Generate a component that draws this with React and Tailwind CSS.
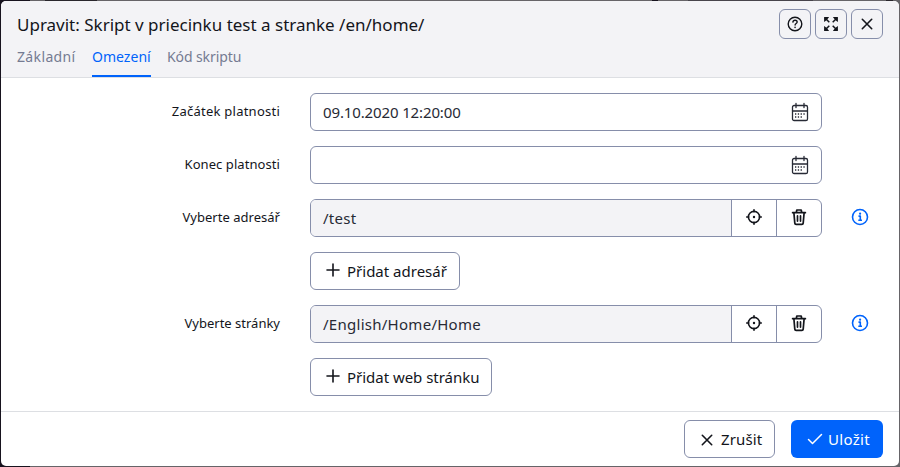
import React from "react";

const HelpIcon = () => (
  <svg width="16" height="16" viewBox="0 0 16 16" fill="none" stroke="currentColor" strokeWidth="1.4" strokeLinecap="round" strokeLinejoin="round">
    <circle cx="8" cy="8" r="6.8" />
    <path d="M5.9 6.1c.1-1.2 1-1.9 2.15-1.9s2.1.75 2.1 1.8c0 1.5-2.05 1.5-2.05 3.1" />
    <path d="M8.05 11.3v.3" strokeWidth="1.5" />
  </svg>
);

const ExpandIcon = () => (
  <svg width="16" height="16" viewBox="0 0 16 16" fill="none" stroke="currentColor" strokeWidth="1.5">
    <path d="M2 2l4.300 4.300M14 2L9.700 6.300M2 14l4.300-4.300M14 14L9.700 9.700" />
    <path fill="currentColor" stroke="none" d="M1.1 1.1h5l-1.3 1.7-2 2-1.7 1.3zM14.9 1.1h-5l1.3 1.7 2 2 1.7 1.3zM1.1 14.9h5l-1.3-1.7-2-2-1.7-1.3zM14.900 14.900h-5l1.3-1.7 2-2 1.7-1.3z" />
  </svg>
);

const CrossIcon = () => (
  <svg width="14" height="14" viewBox="0 0 14 14" fill="none" stroke="currentColor" strokeWidth="1.6" strokeLinecap="round">
    <path d="M2.300 2.300l9.400 9.400M11.700 2.300l-9.400 9.400" />
  </svg>
);

const PlusIcon = () => (
  <svg width="14" height="14" viewBox="0 0 14 14" fill="none" stroke="currentColor" strokeWidth="1.6" strokeLinecap="round">
    <path d="M7 1v12M1 7h12" />
  </svg>
);

const CheckIcon = () => (
  <svg width="16" height="14" viewBox="0 0 16 14" fill="none" stroke="currentColor" strokeWidth="1.5" strokeLinecap="round" strokeLinejoin="round">
    <path d="M1.5 7.5l4 4L14.500 2.500" />
  </svg>
);

const CalendarIcon = () => (
  <svg width="18" height="20" viewBox="0 0 18 20" fill="none" stroke="currentColor" strokeWidth="1.3" strokeLinecap="round">
    <rect x="1.5" y="3.5" width="15" height="15" rx="1.600" />
    <path d="M1.5 9h15M5 1.500v4M13 1.500v4" />
    <path strokeLinecap="butt" strokeDasharray="1.300 1.500" d="M4 12h10.700M4 15h7.300" />
  </svg>
);

const TargetIcon = () => (
  <svg width="18" height="18" viewBox="0 0 18 18" fill="none" stroke="currentColor" strokeWidth="1.6" strokeLinecap="round">
    <circle cx="9" cy="9" r="5.600" />
    <path d="M9 1.700v2M9 14.300v2M1.700 9h2M14.300 9h2" />
    <circle cx="9" cy="9" r="1.200" fill="currentColor" stroke="none" />
  </svg>
);

const TrashIcon = () => (
  <svg width="16" height="18" viewBox="0 0 16 18" fill="none" stroke="currentColor" strokeWidth="1.7" strokeLinecap="round" strokeLinejoin="round">
    <path d="M1.600 4.700h12.800M5.300 4.500l.5-2.500h4.400l.5 2.500" />
    <path d="M2.900 4.900l.9 10.200q.1 1.200 1.300 1.200h5.800q1.200 0 1.300-1.200l.9-10.200M6.500 7.900v5.200M9.500 7.900v5.200" />
  </svg>
);

const InfoIcon = () => (
  <svg width="18" height="18" viewBox="0 0 18 18" fill="none" stroke="currentColor" strokeWidth="1.6" strokeLinejoin="round">
    <circle cx="9" cy="9" r="7.500" />
    <path d="M7.500 8.100h1.800v4.100M7.300 12.300h3.700" />
    <circle cx="9.100" cy="5.700" r="1.100" fill="currentColor" stroke="none" />
  </svg>
);

const HeaderButton = ({ label, children }) => (
  <button aria-label={label} className="flex h-[30px] w-8 items-center justify-center rounded-[6px] border border-[#868eaa]">
    {children}
  </button>
);

const Row = ({ label, labelClass = "", info, children }) => (
  <div className="flex h-[38px]">
    <div className="flex w-[279px] justify-end pt-[9px] text-[13px] leading-[19px] whitespace-nowrap">
      <span className={labelClass}>{label}</span>
    </div>
    <div className="ml-[30px] flex w-[512px]">{children}</div>
    {info && (
      <div className="mt-[9px] ml-[29px] h-[18px] text-[#0063fb]">
        <InfoIcon />
      </div>
    )}
  </div>
);

const DateField = ({ value }) => (
  <div className="flex w-full items-center justify-between rounded-[6px] border border-[#868eaa] px-3 text-[15px] text-[#272a35]">
    <span className="tracking-[-0.13px]">{value}</span>
    <CalendarIcon />
  </div>
);

const PathField = ({ value, valueClass }) => (
  <div className="flex w-full overflow-hidden rounded-[6px] border border-[#868eaa]">
    <div className="flex flex-1 items-center bg-[#f3f3f6] pl-3 text-[15px] text-[#272a35]">
      <span className={valueClass}>{value}</span>
    </div>
    <button aria-label="Vybrat" className="flex w-[45px] items-center justify-center border-l border-[#868eaa] pb-[2px]">
      <TargetIcon />
    </button>
    <button aria-label="Smazat" className="flex w-[45px] items-center justify-center border-l border-[#868eaa] pb-[2px]">
      <TrashIcon />
    </button>
  </div>
);

const AddButton = ({ className, children }) => (
  <button className={"flex h-[38px] items-center rounded-[6px] border border-[#868eaa] pl-[15px] text-[15px] whitespace-nowrap " + className}>
    <span className="mr-[7px] mb-[3px]">
      <PlusIcon />
    </span>
    <span>{children}</span>
  </button>
);

export default function App() {
  return (
    <div className="relative h-[467px] w-[900px] overflow-hidden bg-[#666468] p-px font-['Noto_Sans','Open_Sans',sans-serif] text-[#13151b]">
      <div className="absolute top-0 left-0 h-[467px] w-[30px] bg-[#17131e]" />
      <div className="absolute top-0 left-[45px] h-px w-[52px] bg-[#29262c]" />
      <div className="absolute top-0 left-[652px] h-px w-[6px] bg-[#17131e]" />
      <div className="absolute top-0 left-[688px] h-px w-[125px] bg-[#47444b]" />
      <div className="absolute top-0 left-[886px] h-px w-[7px] bg-[#29262c]" />
      <div className="relative flex h-[465px] w-[898px] flex-col overflow-hidden rounded-[5px] bg-white">
        <header className="flex h-[77px] shrink-0 flex-col border-b border-[#dddfe3] bg-[#f3f3f6] px-4">
          <div className="flex h-[43px] justify-between pt-2">
            <h1 className="pt-1 text-[17px] leading-6 whitespace-nowrap">
              Upravit: Skript v priecinku test a stranke /en/home/
            </h1>
            <div className="flex gap-1">
              <HeaderButton label="Nápověda"><HelpIcon /></HeaderButton>
              <HeaderButton label="Celá obrazovka"><ExpandIcon /></HeaderButton>
              <HeaderButton label="Zavřít"><CrossIcon /></HeaderButton>
            </div>
          </div>
          <nav className="flex h-[33px] gap-4 text-[14px] leading-[26px] whitespace-nowrap text-[#757b92]">
            <span className="w-[59px] tracking-[0.36px]">Základní</span>
            <span className="w-[59px] border-b-2 border-[#0063fb] tracking-[0.03px] text-[#0063fb]">Omezení</span>
            <span className="tracking-[-0.1px]">Kód skriptu</span>
          </nav>
        </header>
        <main className="flex h-[333px] shrink-0 flex-col gap-[15px] pt-[15px]">
          <Row label="Začátek platnosti" labelClass="tracking-[0.24px]"><DateField value="09.10.2020 12:20:00" /></Row>
          <Row label="Konec platnosti" labelClass="tracking-[0.07px]"><DateField value="" /></Row>
          <Row label="Vyberte adresář" labelClass="tracking-[0.03px]" info><PathField value="/test" valueClass="tracking-[0.25px]" /></Row>
          <Row label=""><AddButton className="w-[150px]">Přidat adresář</AddButton></Row>
          <Row label="Vyberte stránky" info><PathField value="/English/Home/Home" valueClass="tracking-[0.27px]" /></Row>
          <Row label=""><AddButton className="w-[182px] tracking-[-0.03px]">Přidat web stránku</AddButton></Row>
        </main>
        <footer className="flex h-[55px] shrink-0 justify-end gap-4 border-t border-[#dddfe3] px-4 pt-2 text-[15px]">
          <button className="flex h-[38px] w-[91px] items-center rounded-[6px] border border-[#868eaa] pl-[15px]">
            <span className="mt-[2px]"><CrossIcon /></span>
            <span className="ml-[7px] tracking-[0.15px]">Zrušit</span>
          </button>
          <button className="flex h-[38px] w-[92px] items-center rounded-[6px] bg-[#0063fb] pl-4 text-white">
            <CheckIcon />
            <span className="ml-[5px] tracking-[0.3px]">Uložit</span>
          </button>
        </footer>
      </div>
    </div>
  );
}
